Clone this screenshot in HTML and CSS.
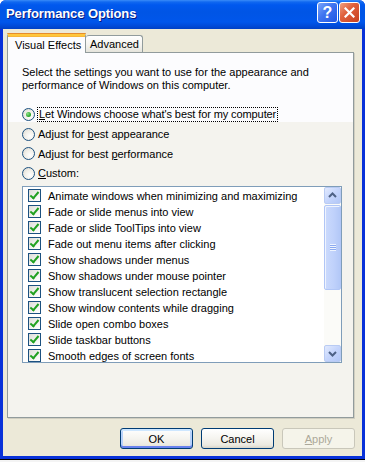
FILE: index.html
```html
<!DOCTYPE html>
<html lang="en">
<head>
  <meta charset="UTF-8" />
  <title>Performance Options</title>
  <link rel="stylesheet" href="styles.css">
</head>
<body>
  <div class="window">
    <div class="titlebar">
      <span class="title">Performance Options</span>
      <div class="caption-buttons">
        <span class="cap-btn help">?</span>
        <span class="cap-btn close">
          <svg width="11" height="11" viewBox="0 0 11 11"><path d="M1.5 1.5 L9.5 9.5 M9.5 1.5 L1.5 9.5" stroke="#fff" stroke-width="2.2" stroke-linecap="square"/></svg>
        </span>
      </div>
    </div>

    <div class="client">
      <div class="tabs">
        <div class="tab active">Visual Effects</div>
        <div class="tab">Advanced</div>
      </div>

      <div class="panel">
        <div class="panel-top">
          <p class="intro">Select the settings you want to use for the appearance and<br>performance of Windows on this computer.</p>
          <div class="radio-row">
            <span class="radio checked"></span>
            <span class="focus"><u>L</u>et Windows choose what's best for my computer</span>
          </div>
        </div>

        <div class="panel-bottom">
          <div class="radio-row">
            <span class="radio"></span>
            <span>Adjust for <u>b</u>est appearance</span>
          </div>
          <div class="radio-row">
            <span class="radio"></span>
            <span>Adjust for best <u>p</u>erformance</span>
          </div>
          <div class="radio-row">
            <span class="radio"></span>
            <span><u>C</u>ustom:</span>
          </div>

          <div class="listbox">
            <div class="items">
              <div class="item"><span class="check"></span>Animate windows when minimizing and maximizing</div>
              <div class="item"><span class="check"></span>Fade or slide menus into view</div>
              <div class="item"><span class="check"></span>Fade or slide ToolTips into view</div>
              <div class="item"><span class="check"></span>Fade out menu items after clicking</div>
              <div class="item"><span class="check"></span>Show shadows under menus</div>
              <div class="item"><span class="check"></span>Show shadows under mouse pointer</div>
              <div class="item"><span class="check"></span>Show translucent selection rectangle</div>
              <div class="item"><span class="check"></span>Show window contents while dragging</div>
              <div class="item"><span class="check"></span>Slide open combo boxes</div>
              <div class="item"><span class="check"></span>Slide taskbar buttons</div>
              <div class="item"><span class="check"></span>Smooth edges of screen fonts</div>
            </div>
            <div class="scrollbar">
              <div class="sb-btn">
                <svg width="15" height="15" viewBox="0 0 15 15"><path d="M4 9 L7.5 5.5 L11 9" fill="none" stroke="#4d6185" stroke-width="2"/></svg>
              </div>
              <div class="sb-track">
                <div class="sb-thumb"><span class="grip"></span></div>
              </div>
              <div class="sb-btn">
                <svg width="15" height="15" viewBox="0 0 15 15"><path d="M4 6 L7.5 9.5 L11 6" fill="none" stroke="#4d6185" stroke-width="2"/></svg>
              </div>
            </div>
          </div>
        </div>
      </div>

      <div class="buttons">
        <button class="btn default">OK</button>
        <button class="btn">Cancel</button>
        <button class="btn disabled"><u>A</u>pply</button>
      </div>
    </div>
  </div>
  <div class="desktop"></div>
</body>
</html>
```

FILE: styles.css
```css
* {
  margin: 0;
  padding: 0;
  box-sizing: border-box;
}

body {
  width: 365px;
  height: 462px;
  overflow: hidden;
  background: #fff;
  font-family: 'Liberation Sans', Arial, sans-serif;
  font-size: 11px;
  color: #000;
}

.window {
  width: 365px;
  height: 459px;
  display: flex;
  flex-direction: column;
  background: #0831d9;
  border-radius: 6px 6px 0 0;
}

/* title bar */
.titlebar {
  height: 29px;
  display: flex;
  align-items: flex-start;
  justify-content: space-between;
  padding: 2px 5px 0 6px;
  border-radius: 6px 6px 0 0;
  background: linear-gradient(to bottom, #3a8cf8 0px, #1068f0 2px, #0058ee 5px, #0055e5 12px, #0056eb 22px, #004ad8 26px, #0040c4 29px);
}

.title {
  color: #fff;
  font-weight: bold;
  font-size: 13px;
  line-height: 21px;
  padding-top: 1px;
  letter-spacing: -0.1px;
  text-shadow: 1px 1px 0 #0a1a80;
}

.caption-buttons {
  display: flex;
  gap: 1px;
}

.cap-btn {
  width: 21px;
  height: 21px;
  border: 1px solid #fff;
  border-radius: 3px;
  display: flex;
  align-items: center;
  justify-content: center;
  color: #fff;
}

.help {
  background: linear-gradient(135deg, #7aa5fb, #3f74f0 45%, #2157e3);
  font-weight: bold;
  font-size: 16px;
}

.close {
  background: linear-gradient(135deg, #f0a080, #e0613d 40%, #c8401f);
}

/* client area */
.client {
  flex: 1;
  margin: 0 3px 3px 3px;
  background: #ece9d8;
  padding: 4px 7px 0 4px;
  display: flex;
  flex-direction: column;
}

.tabs {
  display: flex;
  align-items: flex-end;
  height: 19px;
}

.tab {
  height: 17px;
  padding: 0 5px;
  border: 1px solid #919b9c;
  border-bottom: none;
  border-radius: 3px 3px 0 0;
  background: linear-gradient(to bottom, #fff, #f3f2ed 60%, #e5e4dc);
  line-height: 16px;
  color: #000;
}

.tab.active {
  position: relative;
  z-index: 1;
  height: 20px;
  margin-bottom: -1px;
  width: 79px;
  padding: 0 0 0 7px;
  line-height: 18px;
  background: #fcfcfe;
  border-top: 3px solid #ffc73c;
  box-shadow: inset 0 1px 0 #f7b63a;
}

.tab.active::before {
  content: "";
  position: absolute;
  left: -1px;
  right: -1px;
  top: -3px;
  height: 1px;
  background: #e68b2c;
  border-radius: 3px 3px 0 0;
}

.tab:not(.active) {
  width: 57px;
  padding: 0 0 0 4px;
  border-left: none;
}

.panel {
  width: 347px;
  height: 366px;
  border: 1px solid #919b9c;
  box-shadow: 1px 1px 0 #d0cec1;
  background: #f4f3ee;
  display: flex;
  flex-direction: column;
}

.panel-top {
  background: #fcfcfe;
  padding: 13px 0 0 14px;
  height: 69px;
}

.intro {
  line-height: 13px;
  margin-bottom: 15px;
}

.radio-row {
  display: flex;
  align-items: center;
  height: 14px;
  gap: 3px;
}

.radio {
  width: 13px;
  height: 13px;
  border: 1px solid #1c5180;
  border-radius: 50%;
  background: radial-gradient(circle at 65% 65%, #fff 0%, #f1efe8 50%, #d6d4cb 100%);
  position: relative;
  flex-shrink: 0;
}

.radio.checked::after {
  content: "";
  position: absolute;
  left: 3px;
  top: 3px;
  width: 5px;
  height: 5px;
  border-radius: 50%;
  background: radial-gradient(circle at 35% 35%, #8ee08a, #21a121 70%);
}

.focus {
  outline: 1px dotted #000;
  outline-offset: 0;
  padding: 0 1px;
  line-height: 13px;
  letter-spacing: -0.1px;
}

.panel-bottom {
  padding: 5px 0 0 14px;
  display: flex;
  flex-direction: column;
  gap: 5.5px;
}

/* list of check boxes */
.listbox {
  width: 320px;
  height: 177px;
  border: 1px solid #7f9db9;
  background: #fff;
  display: flex;
}

.items {
  flex: 1;
  overflow: hidden;
  padding: 1px 0 0 5px;
}

.item {
  height: 16px;
  display: flex;
  align-items: center;
  gap: 7px;
  white-space: nowrap;
}

.check {
  width: 13px;
  height: 13px;
  border: 1px solid #1c5180;
  background: linear-gradient(135deg, #dcdcd7, #f4f4f1 60%, #fff);
  position: relative;
  flex-shrink: 0;
}

.check::after {
  content: "";
  position: absolute;
  left: 3px;
  top: 0px;
  width: 3px;
  height: 7px;
  border-right: 2.5px solid #21a121;
  border-bottom: 2.5px solid #21a121;
  transform: rotate(40deg);
}

.scrollbar {
  width: 17px;
  display: flex;
  flex-direction: column;
  background: #fbfbf8;
}

.sb-btn {
  height: 17px;
  border: 1px solid #b9cbf3;
  border-radius: 2px;
  background: linear-gradient(135deg, #e2eafe, #c5d5fc 50%, #b2c7f7);
  display: flex;
  align-items: center;
  justify-content: center;
}

.sb-track {
  flex: 1;
  padding: 1px 0;
}

.sb-thumb {
  height: 85px;
  border: 1px solid #b1c6f6;
  border-radius: 2px;
  background: linear-gradient(to right, #cbdafc, #bfd1fb 60%, #b3c8f7);
  box-shadow: inset 1px 1px 0 #eef3fe;
  display: flex;
  align-items: center;
  justify-content: center;
}

.grip {
  width: 6px;
  height: 7px;
  background: repeating-linear-gradient(to bottom, #eef4fe 0 1px, #8caaf0 1px 2px);
}

/* dialog buttons */
.buttons {
  display: flex;
  justify-content: flex-end;
  gap: 8px;
  margin-top: 10px;
}

.btn {
  width: 73px;
  height: 21px;
  border: 1px solid #003c74;
  border-radius: 3px;
  background: linear-gradient(to bottom, #fff, #f5f4ef 50%, #ebe9e0 85%, #d8d4c8);
  font-family: 'Liberation Sans', Arial, sans-serif;
  font-size: 11px;
  color: #000;
}

.btn.default {
  box-shadow: inset 0 2px 0 #cee7ff, inset 0 -2px 0 #6982ee, inset 2px 0 0 #b8d2fa, inset -2px 0 0 #b8d2fa;
}

.btn.disabled {
  border-color: #c9c7ba;
  background: #f5f4ea;
  color: #aca899;
}

.desktop {
  height: 3px;
  border-top: 1px solid #000;
  background: #f4f4f4;
}
```
